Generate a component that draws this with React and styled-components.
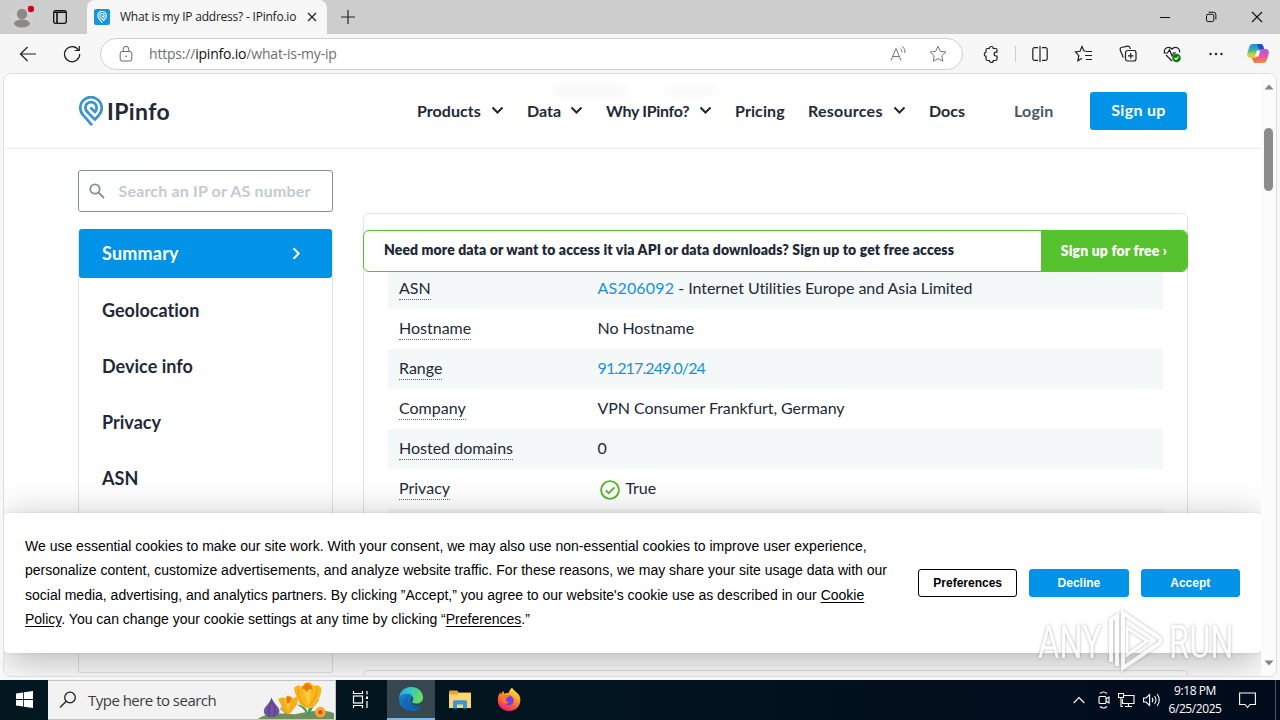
import styled, { createGlobalStyle, css } from "styled-components"

const navItems = [
    {name:'Products', menu:true, spacing:0.05},
    {name:'Data', menu:true},
    {name:'Why IPinfo?', menu:true, spacing:-0.3},
    {name:'Pricing', spacing:0.1},
    {name:'Resources', menu:true, spacing:0.25},
    {name:'Docs'},
]

const sideItems = ['Geolocation','Device info','Privacy','ASN']

const rows = [
    {label:'ASN', link:'AS206092', text:' - Internet Utilities Europe and Asia Limited'},
    {label:'Hostname', text:'No Hostname'},
    {label:'Range', link:'91.217.249.0/24', spacing:-0.88},
    {label:'Company', text:'VPN Consumer Frankfurt, Germany'},
    {label:'Hosted domains', text:'0'},
    {label:'Privacy', text:'True', check:true},
    {label:'', text:''},
]

export default function App(){
    return(
        <Screen>
            <GlobalStyle/>
            <TabStrip/>
            <Toolbar/>
            <Viewport>
                <Page>
                    <Header/>
                    <Columns>
                        <Sidebar/>
                        <Details/>
                    </Columns>
                    <Cookies/>
                </Page>
                <Scrollbar/>
            </Viewport>
            <Taskbar/>
            <Watermark/>
        </Screen>
    )
}

function TabStrip(){
    return(
        <Strip>
            <StripLeft>
                <svg width="24" height="24" viewBox="0 0 24 24">
                    <circle cx="12" cy="12" r="11.5" fill="#d2d0ce"/>
                    <circle cx="12" cy="9" r="5.2" fill="#8b8886"/>
                    <ellipse cx="12" cy="18.500" rx="8" ry="4" fill="#8b8886"/>
                    <circle cx="21" cy="4" r="3.200" fill="#d0021b"/>
                </svg>
                <svg width="16" height="16" viewBox="0 0 16 16" fill="none" stroke="#111">
                    <rect x="1.700" y="1.700" width="12.600" height="12.600" rx="2" strokeWidth="1.300"/>
                    <path d="M2 3.300h12M5 4v10" strokeWidth="1.600"/>
                </svg>
            </StripLeft>
            <Tab>
                <Favicon><PinIcon size={13} color="#fff"/></Favicon>
                <TabTitle>What is my IP address? - IPinfo.io</TabTitle>
                <svg width="10" height="10" viewBox="0 0 10 10" stroke="#222" strokeWidth="1.200"><path d="M1 1l8 8M9 1L1 9"/></svg>
            </Tab>
            <NewTab>
                <svg width="14" height="14" viewBox="0 0 14 14" stroke="#222" strokeWidth="1.200"><path d="M7 0v14M0 7h14"/></svg>
            </NewTab>
            <WindowButtons>
                <svg width="12" height="12" viewBox="0 0 12 12" stroke="#111"><path d="M1 6.500h10"/></svg>
                <svg width="12" height="12" viewBox="0 0 12 12" fill="none" stroke="#111">
                    <rect x="1.500" y="3.300" width="7.300" height="7.300" rx="1.500"/>
                    <path d="M3.500 1.200h4.800a2.600 2.600 0 0 1 2.600 2.600v4.700"/>
                </svg>
                <svg width="12" height="12" viewBox="0 0 12 12" stroke="#111" strokeWidth="1.100"><path d="M1 1l10 10M11 1L1 11"/></svg>
            </WindowButtons>
        </Strip>
    )
}

function Toolbar(){
    return(
        <Bar>
            <BarCell $w={44}>
                <ToolIcon><path d="M18 10H2.500M9.500 3l-7 7 7 7"/></ToolIcon>
            </BarCell>
            <BarCell $w={44}>
                <ToolIcon><path d="M16.600 6.200A7.600 7.600 0 1 0 17.700 10M17.300 2v4.500h-4.500"/></ToolIcon>
            </BarCell>
            <Address>
                <svg width="16" height="18" viewBox="0 0 16 18" fill="none" stroke="#666">
                    <rect x="2.200" y="6.500" width="11.600" height="9.500" rx="2"/>
                    <path d="M5.200 6.500V4.200a2.800 2.800 0 0 1 5.600 0v2.300"/>
                    <circle cx="8" cy="11.200" r=".8" fill="#555" stroke="none"/>
                </svg>
                <Url>https://<b>ipinfo.io</b>/what-is-my-ip</Url>
                <ToolIcon $dim>
                    <path d="M2 16.500L7 4.500l5 12M3.700 12.500h6.600M11 4.500a4 4 0 0 1 2 4M13 2.200a7 7 0 0 1 3 6.800"/>
                </ToolIcon>
                <ToolIcon $dim>
                    <path d="M10 2.300l2.300 5 5.500.700-4 3.800 1 5.400L10 14.600l-4.800 2.600 1-5.400-4-3.800 5.500-.700z"/>
                </ToolIcon>
            </Address>
            <Extensions>
                <ToolIcon>
                    <path d="M6.500 4.500h1.800a2 2 0 0 1 4 0h2.200a1.500 1.500 0 0 1 1.500 1.500v2.200h-1a1.900 1.900 0 0 0 0 3.800h1v3a1.500 1.500 0 0 1-1.500 1.500h-2.200a2 2 0 0 1-4 0H6.500A1.500 1.500 0 0 1 5 15v-2.600a2.200 2.200 0 0 1 0-4.300V6a1.500 1.500 0 0 1 1.500-1.500z"/>
                </ToolIcon>
            </Extensions>
            <BarCell $w={44}>
                <ToolIcon><path d="M8 3.700H4.500A1.700 1.700 0 0 0 2.800 5.400v9.200a1.700 1.700 0 0 0 1.700 1.700H8M12 3.700h3.500a1.700 1.700 0 0 1 1.700 1.700v9.200a1.700 1.700 0 0 1-1.700 1.700H12M10 2v16"/></ToolIcon>
            </BarCell>
            <BarCell $w={44}>
                <ToolIcon><path d="M11.800 7L10 7 8 2.500 6 7.300l-4.500.700 3.300 3.600-.900 5.200L8 14.300M12 7.500h6M11 11.500h7M12 15.500h6"/></ToolIcon>
            </BarCell>
            <BarCell $w={44}>
                <ToolIcon>
                    <rect x="7.500" y="6.500" width="10.500" height="10.500" rx="2.200"/>
                    <path d="M12.700 9v5.600M10 11.800h5.500M5.300 13.500L2.300 6.200a2 2 0 0 1 1.100-2.700l6-1.400a2 2 0 0 1 2.300 1.200l.800 1.700"/>
                </ToolIcon>
            </BarCell>
            <BarCell $w={44}>
                <ToolIcon>
                    <path d="M10 17L4 11M2.500 8.500C1.500 4 7 1.500 10 5c3-3.500 8.500-1 7.500 3.500M1.500 9h4l2-3.200 2.500 6 1.700-3h2"/>
                    <circle cx="14.500" cy="14" r="4.300" fill="#107c10" stroke="none"/>
                    <path d="M12.600 14l1.400 1.400 2.500-2.700" stroke="#fff"/>
                </ToolIcon>
            </BarCell>
            <BarCell $w={44}>
                <svg width="20" height="20" viewBox="0 0 20 20" fill="#222">
                    <circle cx="4.500" cy="10" r="1.200"/><circle cx="10" cy="10" r="1.200"/><circle cx="15.500" cy="10" r="1.200"/>
                </svg>
            </BarCell>
            <BarCell $w={40}><Copilot/></BarCell>
        </Bar>
    )
}

function Copilot(){
    return(
        <svg width="22" height="21" viewBox="0 0 22 21">
            <defs>
                <linearGradient id="cpA" x1="0" y1="0" x2="0" y2="1">
                    <stop offset="0" stopColor="#2386dd"/><stop offset=".45" stopColor="#35b7a0"/><stop offset=".75" stopColor="#c6d63a"/><stop offset="1" stopColor="#f5c518"/>
                </linearGradient>
                <linearGradient id="cpB" x1="0" y1="0" x2="0" y2="1">
                    <stop offset="0" stopColor="#a45ce6"/><stop offset=".5" stopColor="#e0569b"/><stop offset="1" stopColor="#fb8a4c"/>
                </linearGradient>
            </defs>
            <path d="M6 1h8.500l-4.300 14H3.500C0 15-.300 12 .600 9l1.700-5C3 2 4 1 6 1z" fill="url(#cpA)"/>
            <path d="M16 20H7.500l4.300-14h6.700c3.500 0 3.800 3 2.900 6l-1.700 5c-.700 2-1.700 3-3.700 3z" fill="url(#cpB)"/>
            <path d="M10 1h4c1.700 0 2.500 2 3.200 5h-5.400z" fill="#1c50c8"/>
            <path d="M3.500 15h6.700L9 20c-2 0-2.700-1.500-3.200-3-.400-1.200-1-2-2.300-2z" fill="#f3703a"/>
            <path d="M9.700 7.500h3.500l-1.500 6H8z" fill="#f7f7f7"/>
        </svg>
    )
}

// location pin with the spiral inside
function PinIcon({size, color}){
    return(
        <svg width={size} height={size*1.25} viewBox="0 0 24 30" fill="none" stroke={color} strokeWidth="2.700" strokeLinecap="round" strokeLinejoin="round">
            <path d="M12.300 28.300L4.200 19.200C1.800 16.700 1.300 14.500 1.300 12a10.700 10.700 0 1 1 18.600 7.100L15.800 23.600 8.400 16"/>
            <path d="M8.400 16A5.600 5.600 0 1 1 17.600 12c0 1.600-.600 3-1.600 4.100l-3.800-3.900" />
        </svg>
    )
}

function Chevron(){
    return(
        <svg width="13" height="9" viewBox="0 0 13 9" fill="none" stroke="#212936" strokeWidth="2.100"><path d="M1.500 1.500l5 5 5-5"/></svg>
    )
}

function Header(){
    return(
        <Top>
            <Ghost/>
            <Logo>
                <PinIcon size={24} color="#3b93cf"/>
                <span>IPinfo</span>
            </Logo>
            <Nav>
                {navItems.map(n=>
                    <NavItem key={n.name} $spacing={n.spacing}>
                        <span>{n.name}</span>
                        {n.menu && <Chevron/>}
                    </NavItem>
                )}
                <Login>Login</Login>
                <SignUp>Sign up</SignUp>
            </Nav>
        </Top>
    )
}

function Sidebar(){
    return(
        <Side>
            <SearchBox>
                <svg width="16" height="16" viewBox="0 0 16 16" fill="none" stroke="#83919a" strokeWidth="1.800">
                    <circle cx="6" cy="6" r="4.700"/><path d="M9.500 9.500l5.500 5.500"/>
                </svg>
                <span>Search an IP or AS number</span>
            </SearchBox>
            <Menu>
                <ActiveItem>
                    <span>Summary</span>
                    <svg width="9" height="13" viewBox="0 0 9 13" fill="none" stroke="#fff" strokeWidth="2"><path d="M1.500 1.300l5.200 5.200-5.200 5.200"/></svg>
                </ActiveItem>
                {sideItems.map(s=><MenuItem key={s}>{s}</MenuItem>)}
            </Menu>
        </Side>
    )
}

function Details(){
    return(
        <Main>
            <Card>
                <Cta>
                    <CtaText>Need more data or want to access it via API or data downloads? Sign up to get free access</CtaText>
                    <CtaButton>Sign up for free ›</CtaButton>
                </Cta>
                {rows.map((r,i)=>
                    <Row key={i} $tint={i%2===0}>
                        <Label>{r.label && <span>{r.label}</span>}</Label>
                        <Value>
                            {r.check &&
                                <svg width="20" height="20" viewBox="0 0 20 20" fill="none" stroke="#55b82f" strokeWidth="1.900">
                                    <circle cx="10" cy="10" r="8.900"/><path d="M5.800 10.300l2.900 2.800 5.700-5.800"/>
                                </svg>
                            }
                            {r.link && <DataLink $spacing={r.spacing}>{r.link}</DataLink>}
                            <Text>{r.text}</Text>
                        </Value>
                    </Row>
                )}
            </Card>
            <NextCard/>
        </Main>
    )
}

function Cookies(){
    return(
        <Banner>
            <BannerText>
                We use essential cookies to make our site work. With your consent, we may also use non-essential cookies to improve user experience,<br/>
                personalize content, customize advertisements, and analyze website traffic. For these reasons, we may share your site usage data with our<br/>
                social media, advertising, and analytics partners. By clicking ”Accept,” you agree to our website's cookie use as described in our <u>Cookie</u><br/>
                <u>Policy</u>. You can change your cookie settings at any time by clicking “<u>Preferences</u>.”
            </BannerText>
            <BannerButtons>
                <BannerButton $outline>Preferences</BannerButton>
                <BannerButton>Decline</BannerButton>
                <BannerButton>Accept</BannerButton>
            </BannerButtons>
        </Banner>
    )
}

function Scrollbar(){
    return(
        <Track>
            <svg width="10" height="6" viewBox="0 0 10 6" fill="#858585"><path d="M5 .500L9.500 5.500H.500z"/></svg>
            <Thumb/>
            <svg width="10" height="6" viewBox="0 0 10 6" fill="#858585"><path d="M5 5.500L.500.500h9z"/></svg>
        </Track>
    )
}

function Flowers(){
    return(
        <svg width="80" height="38" viewBox="0 0 80 39">
            <path d="M2 39C14 30 28 34 40 34c12-2 28-6 40-1v6z" fill="#6f8f5b"/>
            <path d="M52 34c-4-8-8-8-10-10 6 0 10 4 11 8 1-6 4-10 12-13-4 6-8 8-9 15z" fill="#3fa25c"/>
            <path d="M30 34c-3-4-5-5-6-6 4 0 6 2 7 4 1-4 4-6 7-6-3 3-4 5-5 8z" fill="#3fa25c"/>
            <path d="M16 17c1 6 8 9 8 14 0 4-4 6-8 6s-8-2-8-6c0-5 7-8 8-14z" fill="#70529f"/>
            <path d="M16 18c-2 7-4 12-2 19M17 20c3 8 3 12 1 17" fill="none" stroke="#543c82"/>
            <path d="M23 18l4-1 3 1 2-3 4 1 2 2 4-2 1 3c-1 3 0 5-3 8s-3 6-7 7c-5-1-7-5-7-8s-3-4-3-8z" fill="#f6ad1b"/>
            <path d="M29 20l3-3 4 3-3 11z" fill="#fbc93c"/>
            <path d="M31 19l1-3 4 1-1 5-3 1z" fill="#e9770f"/>
            <path d="M39 7l4-3 4 2 3-4 5-1 4 4 4-1 4 3c0 6-1 8-3 12-2 6-5 9-10 9-6 0-9-4-11-9-2-5-4-7-4-12z" fill="#f9b61d"/>
            <path d="M48 8l4-3 5 3-3 19z" fill="#fdcb3c"/>
            <path d="M49 5l3-3 5 3 1 4-3-1-3 3-3-3-2 0z" fill="#ec7a10"/>
            <path d="M43 8c0 9 3 15 8 18M63 8c-1 8-4 14-9 18" fill="none" stroke="#e2920f"/>
            <circle cx="66" cy="32" r="5.500" fill="#f5a732"/>
            <circle cx="66" cy="32" r="2.300" fill="#c55f14"/>
        </svg>
    )
}

function Taskbar(){
    return(
        <Tasks>
            <TaskCell $w={48}>
                <svg width="17" height="17" viewBox="0 0 17 17" fill="#fff"><path d="M0 2.400l7.200-1v6.700H0zM8 1.300L17 0v8.100H8zM0 8.900h7.200v6.700L0 14.600zM8 8.900h9V17l-9-1.300z"/></svg>
            </TaskCell>
            <TaskSearch>
                <svg width="18" height="18" viewBox="0 0 18 18" fill="none" stroke="#222" strokeWidth="1.300"><circle cx="11" cy="6.500" r="5.300"/><path d="M7.200 10.300L1 16.500"/></svg>
                <span>Type here to search</span>
                <Flowers/>
            </TaskSearch>
            <TaskCell $w={48}>
                <svg width="17" height="17" viewBox="0 0 17 17" fill="none" stroke="#fff" strokeWidth="1.200">
                    <path d="M1.500 0v2.500h9V0M1.500 17v-2.500h9V17M15 0v3.500M15 10v7"/>
                    <rect x="1.500" y="5" width="9" height="7"/>
                    <rect x="14" y="5.500" width="2" height="2.500" fill="#fff" stroke="none"/>
                </svg>
            </TaskCell>
            <TaskCell $w={48} $gap={3} $active><EdgeLogo/></TaskCell>
            <TaskCell $w={50}>
                <svg width="22" height="19" viewBox="0 0 22 19">
                    <path d="M0 2c0-1 .500-1.500 1.500-1.500H8L10 2.500h12V18H0z" fill="#e8a33c"/>
                    <path d="M0 4.500h8l2-1.500h12v15H0z" fill="#fcd76f"/>
                    <path d="M4 18.500V12c0-1 .700-1.700 1.700-1.700h10.600c1 0 1.700.700 1.700 1.700v6.500h-4v-4H8v4z" fill="#3c97d3"/>
                </svg>
            </TaskCell>
            <TaskCell $w={48}><FirefoxLogo/></TaskCell>
            <Tray>
                <svg width="12" height="8" viewBox="0 0 12 8"><path d="M.700 7L6 1.500 11.300 7"/></svg>
                <svg width="14" height="18" viewBox="0 0 14 18"><rect x="2" y="5.500" width="7" height="7" rx="1"/><path d="M9 8l3-2v6l-3-2M3 2.500c2-2 5-2 7 0M3 15.500c2 2 5 2 7 0"/></svg>
                <svg width="17" height="15" viewBox="0 0 17 15"><path d="M5 2.500h11v8H4.500V6M10.500 10.500v3M7 13.500h7M.500.500h5v4h-5zM3 4.500v9h2"/></svg>
                <svg width="17" height="14" viewBox="0 0 17 14"><path d="M.600 5h2.500l3.500-3.500v11L3.100 9H.600zM9 4.800c1 1.200 1 3.200 0 4.400M11.500 3c2 2.200 2 5.800 0 8M14 1c3 3.500 3 8.500 0 12"/></svg>
            </Tray>
            <Clock>
                <span>9:18 PM</span>
                <span>6/25/2025</span>
            </Clock>
            <Notice>
                <svg width="17" height="17" viewBox="0 0 17 17" fill="none" stroke="#fff" strokeWidth="1.100"><path d="M.600 1h15.800v11.500H11l-2.500 3-2.500-3H.600z"/></svg>
            </Notice>
            <ShowDesktop/>
        </Tasks>
    )
}

function EdgeLogo(){
    return(
        <svg width="26" height="26" viewBox="0 0 26 26">
            <defs>
                <linearGradient id="edgeA" x1="0" y1="0" x2="1" y2=".3"><stop offset="0" stopColor="#2ba7e0"/><stop offset=".5" stopColor="#37c6c4"/><stop offset="1" stopColor="#6bdc58"/></linearGradient>
                <linearGradient id="edgeB" x1="0" y1="0" x2=".6" y2="1"><stop offset="0" stopColor="#1b93dd"/><stop offset="1" stopColor="#0c59a4"/></linearGradient>
            </defs>
            <circle cx="13" cy="13" r="12" fill="url(#edgeB)"/>
            <path d="M1.200 11C2.300 4.500 7.500 1 13 1c7 0 12 4.800 12 10.500 0 4-3 6.300-6.500 6.300-2.700 0-4.500-1-4.500-2 0-.800 1.200-1.300 1.200-3.300 0-2.700-2.700-4.700-6.200-4.700-3.300 0-6.300 1-7.800 3.200z" fill="url(#edgeA)"/>
            <path d="M9.500 14c0 5 4 8.500 9 8.500 2 0 3.500-.500 4.700-1.300C21 24 17 25.500 13.500 25 8 24 5.500 20 5.500 16.500c0-3 2-5.300 4.700-6-.500 1-.700 2-.700 3.500z" fill="#1665b5"/>
            <path d="M14 15.800c0 1 1.800 2 4.500 2 2.500 0 4.700-1.200 5.800-3 1 2 .800 3.500-.500 4.300-3 1.500-7 1.200-9.500-1.300-1.700-1.700-2.200-4-1.400-6 .400-.700 1-1 1.300-.800.900.500 1 1.200 1 1.800 0 1.700-1.200 2.200-1.200 3z" fill="#36474f"/>
        </svg>
    )
}

function FirefoxLogo(){
    return(
        <svg width="24" height="25" viewBox="0 0 24 25">
            <defs>
                <linearGradient id="ff" x1=".8" y1="0" x2=".3" y2="1"><stop offset="0" stopColor="#fff04a"/><stop offset=".4" stopColor="#ff9a25"/><stop offset=".75" stopColor="#ff4a4a"/><stop offset="1" stopColor="#e51d76"/></linearGradient>
            </defs>
            <path d="M15 .800c1 2 3 3 4.500 4.700 3 2 4 5 3.800 8C23 20 18 24 12 24S.800 19.500.800 13.500C.800 9.500 2 7 3.300 5.300L4 7.500l2-3.700 1.500 3c1-.800 3-1 4-.800.800-2 2-4 3.500-5.200z" fill="url(#ff)"/>
            <circle cx="11.800" cy="13.500" r="5" fill="#7a3de0"/>
            <path d="M5.500 8.500c3-1.500 5.500-.500 7 1.500-2 0-3 .500-3.500 2-.500 2 1 3.500 3 3-2 2.500-6 2.500-7.500-1z" fill="#ff7a2a"/>
        </svg>
    )
}

function Watermark(){
    return(
        <Mark>
            <MarkText>ANY</MarkText>
            <svg width="58" height="66" viewBox="0 0 58 66" fill="none" stroke="#fff" strokeWidth="4">
                <path d="M16 5l36 24.500a4 4 0 0 1 0 6L16 60z"/>
                <path d="M4 54V12l6-4v50"/>
                <path d="M20 20l20 13-20 14z" strokeWidth="3"/>
            </svg>
            <MarkText>RUN</MarkText>
        </Mark>
    )
}

const ui = '"Open Sans", "Noto Sans", sans-serif'
const site = 'Lato, "Open Sans", sans-serif'

const GlobalStyle = createGlobalStyle`
    *{
        box-sizing: border-box;
    }
    body{
        margin: 0;
        overflow: hidden;
    }
    svg{
        flex-shrink: 0;
    }
`
const Screen = styled.div`
    position: relative;
    display: flex;
    flex-direction: column;
    width: 1280px;
    height: 720px;
    overflow: hidden;
    background: #f7f7f7;
    white-space: nowrap;
    font-family: ${site};
`
const Strip = styled.div`
    display: flex;
    height: 34px;
    background: #cdcdcd;
`
const StripLeft = styled.div`
    display: flex;
    align-items: center;
    width: 87px;
    padding-left: 10px;
    gap: 18px;
    background: #cdcdcd;
`
const Tab = styled.div`
    display: flex;
    align-items: center;
    width: 240px;
    padding-left: 7px;
    border-radius: 8px 8px 0 0;
    background: #f7f7f7;
`
const Favicon = styled.div`
    display: flex;
    align-items: center;
    justify-content: center;
    width: 16px;
    height: 16px;
    border-radius: 2px;
    background: #1495e0;
    svg{
        width: 10px;
        height: 12px;
    }
`
const TabTitle = styled.div`
    width: 187px;
    margin-left: 10px;
    padding-bottom: 1px;
    font: 12px ${ui};
    letter-spacing: -0.22px;
    color: #1b1b1b;
`
const NewTab = styled.div`
    display: flex;
    align-items: center;
    margin-left: 14px;
`
const WindowButtons = styled.div`
    display: flex;
    align-items: center;
    gap: 34px;
    margin-left: auto;
    padding-right: 17px;
`
const Bar = styled.div`
    display: flex;
    align-items: center;
    height: 39px;
    padding: 0 2px 0 6px;
    background: #f7f7f7;
`
const BarCell = styled.div`
    display: flex;
    align-items: center;
    justify-content: center;
    width: ${p=>p.$w}px;
`
const ToolIcon = styled.svg.attrs({width:20, height:20, viewBox:'0 0 20 20'})`
    fill: none;
    stroke: ${p=>p.$dim ? '#777' : '#1f1f1f'};
    stroke-width: ${p=>p.$dim ? 1 : 1.2};
`
const Address = styled.div`
    display: flex;
    align-items: center;
    width: 863px;
    height: 32px;
    margin: 1px 0 0 6px;
    padding: 0 14px 0 17px;
    border: 1px solid #d0d0d0;
    border-radius: 16px;
    background: #fff;
    svg + svg{
        margin-left: 19px;
    }
`
const Url = styled.div`
    flex: 1;
    margin-left: 15px;
    padding-bottom: 1px;
    font: 14px ${ui};
    letter-spacing: -0.2px;
    color: #6f6f6f;
    b{
        font-weight: 400;
        color: #111;
    }
`
const Extensions = styled.div`
    display: flex;
    align-items: center;
    justify-content: center;
    width: 53px;
    height: 16px;
    margin-right: 2px;
    padding-left: 4px;
    border-right: 1px solid #cfcfcf;
`
const Viewport = styled.div`
    display: flex;
    width: 1274px;
    height: 604px;
    margin-left: 3px;
    border: 1px solid #dedede;
    border-radius: 8px;
    overflow: hidden;
    background: #fff;
`
const Page = styled.div`
    position: relative;
    width: 1257px;
    overflow: hidden;
`
const Track = styled.div`
    display: flex;
    flex-direction: column;
    align-items: center;
    width: 15px;
    padding: 10px 0;
    background: #fcfcfc;
    svg:last-child{
        margin-top: auto;
    }
`
const Thumb = styled.div`
    width: 9px;
    height: 63px;
    margin-top: 38px;
    border-radius: 5px;
    background: #8b8b8b;
`
const Top = styled.div`
    position: relative;
    display: flex;
    align-items: center;
    height: 75px;
    padding: 0 74px 0 75px;
    border-bottom: 1px solid #ededf0;
`
// page text seen blurred through the translucent header
const Ghost = styled.div`
    position: absolute;
    top: 14px;
    left: 550px;
    width: 72px;
    height: 7px;
    background: rgba(0,0,0,.045);
    filter: blur(4px);
    &::after{
        content: "";
        position: absolute;
        left: 112px;
        width: 48px;
        height: 7px;
        background: rgba(0,0,0,.03);
    }
`
const Logo = styled.div`
    display: flex;
    align-items: center;
    gap: 4px;
    width: 338px;
    color: #212936;
    span{
        padding-bottom: 1px;
        font: 700 23px ${site};
        letter-spacing: 0.4px;
    }
`
const Nav = styled.div`
    display: grid;
    grid-template-columns: 110px 79px 129px 73px 121px 85px 76px 97px;
    align-items: center;
    font: 700 16px ${site};
    color: #212936;
`
const NavItem = styled.div`
    display: flex;
    align-items: center;
    justify-content: space-between;
    padding-right: 23px;
    letter-spacing: ${p=>p.$spacing || 0}px;
    span{
        padding-bottom: 2px;
    }
    svg{
        margin-bottom: 1px;
    }
`
const Login = styled.div`
    padding-bottom: 2px;
    letter-spacing: 0.2px;
    color: #46586a;
`
const SignUp = styled.div`
    height: 38px;
    border-radius: 3px;
    background: #0093e7;
    color: #fff;
    line-height: 36px;
    letter-spacing: 0.3px;
    text-align: center;
`
const Columns = styled.div`
    display: flex;
    gap: 30px;
    height: 528px;
    padding: 21px 0 0 74px;
`
const Side = styled.div`
    width: 255px;
`
const SearchBox = styled.div`
    display: flex;
    align-items: center;
    height: 42px;
    padding-left: 10px;
    border: 1px solid #7c93a5;
    border-radius: 3px;
    font: 700 16px ${site};
    letter-spacing: 0.17px;
    color: #c3cbd1;
    span{
        margin-left: 13.5px;
        padding-bottom: 2px;
    }
`
const Menu = styled.div`
    height: 444px;
    margin-top: 17px;
    border: 1px solid #e4e4e8;
    border-top: 0;
    border-radius: 3px;
`
const item = css`
    display: flex;
    align-items: center;
    padding: 0 31px 0 23px;
    font: 700 18px ${site};
`
const ActiveItem = styled.div`
    ${item}
    justify-content: space-between;
    height: 49px;
    margin-bottom: 4px;
    border-radius: 3px;
    background: #0093e7;
    color: #fff;
    letter-spacing: 0.2px;
    span{
        padding-bottom: 2px;
    }
`
const MenuItem = styled.div`
    ${item}
    height: 56px;
    letter-spacing: 0.02px;
    color: #212936;
`
const Main = styled.div`
    width: 825px;
    padding-top: 43px;
`
const Card = styled.div`
    height: 430px;
    padding: 0 24px;
    border: 1px solid #e4e4e8;
    border-radius: 5px;
`
const NextCard = styled.div`
    height: 60px;
    margin-top: 27px;
    border: 1px solid #e4e4e8;
    border-radius: 5px;
`
const Cta = styled.div`
    position: relative;
    display: flex;
    height: 42px;
    margin: 16px -25px -3px;
    border: 1px solid #56c22d;
    border-radius: 6px;
    overflow: hidden;
    background: #fff;
    font: 800 14px/38px ${site};
    color: #212936;
`
const CtaText = styled.div`
    flex: 1;
    padding-left: 20px;
    letter-spacing: 0.11px;
`
const CtaButton = styled.div`
    width: 146px;
    background: #56c22d;
    color: #fff;
    line-height: 40px;
    letter-spacing: 0.15px;
    text-align: center;
`
const Row = styled.div`
    display: flex;
    height: 40px;
    padding-left: 11px;
    background: ${p=>p.$tint ? '#f5f8f8' : '#fff'};
    font: 16px/38px ${site};
    color: #212936;
`
const Label = styled.div`
    width: 198.5px;
    span{
        padding-bottom: 2px;
        border-bottom: 1px dotted #5d6670;
    }
`
const Value = styled.div`
    display: flex;
    align-items: center;
    height: 38px;
    svg{
        margin: 4px 6px 0 2px;
    }
`
const DataLink = styled.a`
    color: #1592dc;
    letter-spacing: ${p=>p.$spacing || 0.2}px;
`
const Text = styled.span`
    white-space: pre;
    letter-spacing: -0.07px;
`
const Banner = styled.div`
    position: absolute;
    left: 0;
    bottom: 23px;
    display: flex;
    align-items: center;
    width: 1257px;
    height: 140px;
    padding: 0 21px;
    border-radius: 4px;
    background: #fff;
    box-shadow: 0 8px 40px rgba(0,0,0,.3), 0 0 3px rgba(0,0,0,.1);
`
const BannerText = styled.div`
    width: 893px;
    padding-bottom: 0.55px;
    font: 14px/24.4px "Liberation Sans", Arial, sans-serif;
    color: #000;
    u{
        text-underline-offset: 2px;
    }
`
const BannerButtons = styled.div`
    display: flex;
    gap: 12px;
`
const BannerButton = styled.div`
    width: 99.3px;
    height: 28px;
    border: 1px solid ${p=>p.$outline ? '#000' : '#0093e7'};
    border-radius: 3px;
    background: ${p=>p.$outline ? '#fff' : '#0093e7'};
    color: ${p=>p.$outline ? '#000' : '#fff'};
    font: bold 12px/26px "Liberation Sans", Arial, sans-serif;
    text-align: center;
`
const Tasks = styled.div`
    display: flex;
    height: 40px;
    margin-top: 3px;
    background: linear-gradient(90deg, #02171f 0%, #02141f 45%, #010b1c 100%);
`
const TaskCell = styled.div`
    display: flex;
    align-items: center;
    justify-content: center;
    width: ${p=>p.$w}px;
    margin-left: ${p=>p.$gap || 0}px;
    border-bottom: 2px solid ${p=>p.$active ? '#76b9ed' : 'transparent'};
    background: ${p=>p.$active ? '#36474f' : 'none'};
`
const TaskSearch = styled.div`
    display: flex;
    align-items: center;
    width: 288px;
    padding-left: 11px;
    border: 1px solid #c4c4c4;
    border-left: 0;
    background: #f2f2f2;
    font: 15px ${ui};
    letter-spacing: -0.52px;
    color: #3c3c3c;
    span{
        flex: 1;
        margin-left: 11px;
    }
`
const Tray = styled.div`
    display: flex;
    align-items: center;
    justify-content: space-between;
    width: 87px;
    margin-left: auto;
    svg{
        fill: none;
        stroke: #fff;
        stroke-width: 1.1;
    }
    svg:nth-child(2){
        margin-left: 4px;
    }
`
const Clock = styled.div`
    display: flex;
    flex-direction: column;
    width: 70px;
    padding-top: 2px;
    font: 12px/18px ${ui};
    letter-spacing: -0.42px;
    color: #fff;
    text-align: center;
`
const Notice = styled.div`
    display: flex;
    align-items: center;
    justify-content: center;
    width: 34px;
`
const ShowDesktop = styled.div`
    width: 5px;
    margin-left: 11px;
    border-left: 1px solid #4a5260;
`
const Mark = styled.div`
    position: absolute;
    left: 1038px;
    top: 608px;
    display: flex;
    align-items: center;
    width: 195px;
    height: 66px;
    justify-content: space-between;
    opacity: .75;
    filter: drop-shadow(0 0 1.5px rgba(0,0,0,.4));
`
const MarkText = styled.div`
    width: 64px;
    padding-top: 2px;
    font: 46px Roboto, sans-serif;
    color: #fff;
    transform: scaleX(.71);
    transform-origin: left;
`
